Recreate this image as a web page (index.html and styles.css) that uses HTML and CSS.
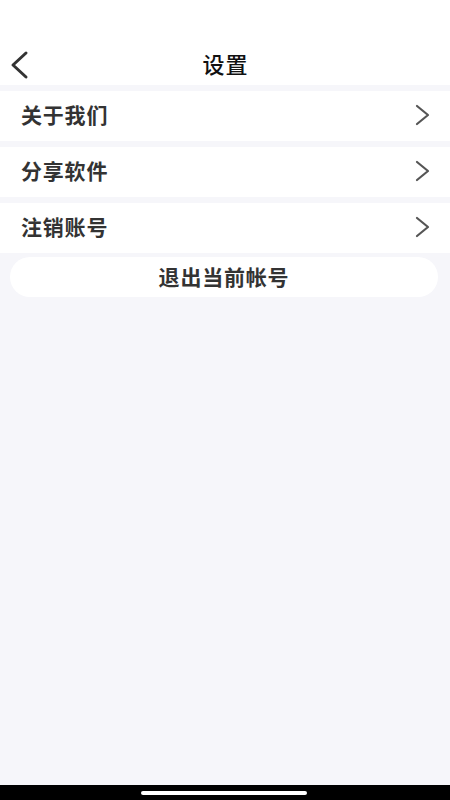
FILE: index.html
```html
<!DOCTYPE html>
<html lang="zh-CN">
<head>
    <meta charset="UTF-8">
    <meta name="viewport" content="width=device-width, initial-scale=1.0">
    <title>设置</title>
    <link rel="stylesheet" href="styles.css">
</head>
<body>
    <div class="page">
        <header class="navbar">
            <button class="back-btn" aria-label="返回">
                <svg width="22" height="30" viewBox="0 0 22 30">
                    <polyline points="17,3 4,15 17,27" fill="none" stroke="#333" stroke-width="3" stroke-linecap="round" stroke-linejoin="round"/>
                </svg>
            </button>
            <h1 class="navbar-title">设置</h1>
        </header>

        <ul class="setting-list">
            <li class="setting-item">
                <span class="setting-label">关于我们</span>
                <svg class="arrow" width="16" height="22" viewBox="0 0 16 22">
                    <polyline points="2,2 13,11 2,20" fill="none" stroke="#555" stroke-width="2.2" stroke-linecap="round" stroke-linejoin="round"/>
                </svg>
            </li>
            <li class="setting-item">
                <span class="setting-label">分享软件</span>
                <svg class="arrow" width="16" height="22" viewBox="0 0 16 22">
                    <polyline points="2,2 13,11 2,20" fill="none" stroke="#555" stroke-width="2.2" stroke-linecap="round" stroke-linejoin="round"/>
                </svg>
            </li>
            <li class="setting-item">
                <span class="setting-label">注销账号</span>
                <svg class="arrow" width="16" height="22" viewBox="0 0 16 22">
                    <polyline points="2,2 13,11 2,20" fill="none" stroke="#555" stroke-width="2.2" stroke-linecap="round" stroke-linejoin="round"/>
                </svg>
            </li>
        </ul>

        <button class="logout-btn">退出当前帐号</button>

        <div class="spacer"></div>

        <div class="home-bar">
            <span class="home-indicator"></span>
        </div>
    </div>
</body>
</html>
```

FILE: styles.css
```css
:root {
    --page-background: #f6f6fa;
    --card-background: #ffffff;
    --text-color: #333333;
    --title-color: #111111;
}

* {
    margin: 0;
    padding: 0;
    box-sizing: border-box;
}

body {
    font-family: "Noto Sans CJK SC", "Noto Sans", sans-serif;
    background-color: var(--page-background);
    color: var(--text-color);
}

.page {
    display: flex;
    flex-direction: column;
    height: 800px;
}

.navbar {
    display: flex;
    align-items: center;
    justify-content: center;
    position: relative;
    height: 85px;
    padding-top: 44px;
    background-color: var(--card-background);
}

.back-btn {
    position: absolute;
    left: 9px;
    top: 50px;
    border: none;
    background: none;
    display: flex;
}

.navbar-title {
    font-size: 22px;
    font-weight: 500;
    letter-spacing: 1px;
    color: var(--title-color);
    line-height: 1;
    margin: -4px 0 0 1px;
}

.setting-list {
    list-style: none;
    display: flex;
    flex-direction: column;
    gap: 6px;
    margin-top: 6px;
}

.setting-item {
    display: flex;
    align-items: center;
    justify-content: space-between;
    height: 50px;
    padding: 0 19px 0 21px;
    background-color: var(--card-background);
}

.setting-label {
    font-size: 21px;
    font-weight: 700;
    letter-spacing: 0.8px;
    line-height: 1;
    margin-top: -4px;
}

.arrow {
    margin-top: -2px;
}

.logout-btn {
    height: 40px;
    margin: 4px 12px 0 10px;
    padding-bottom: 3px;
    border: none;
    border-radius: 20px;
    background-color: var(--card-background);
    font-family: inherit;
    font-size: 21px;
    font-weight: 700;
    letter-spacing: 0.8px;
    color: var(--text-color);
}

.spacer {
    flex: 1;
}

.home-bar {
    height: 15px;
    background-color: #000;
    display: flex;
    justify-content: center;
    align-items: center;
}

.home-indicator {
    width: 166px;
    height: 4px;
    border-radius: 2px;
    background-color: #fff;
    margin-left: -3px;
}
```
